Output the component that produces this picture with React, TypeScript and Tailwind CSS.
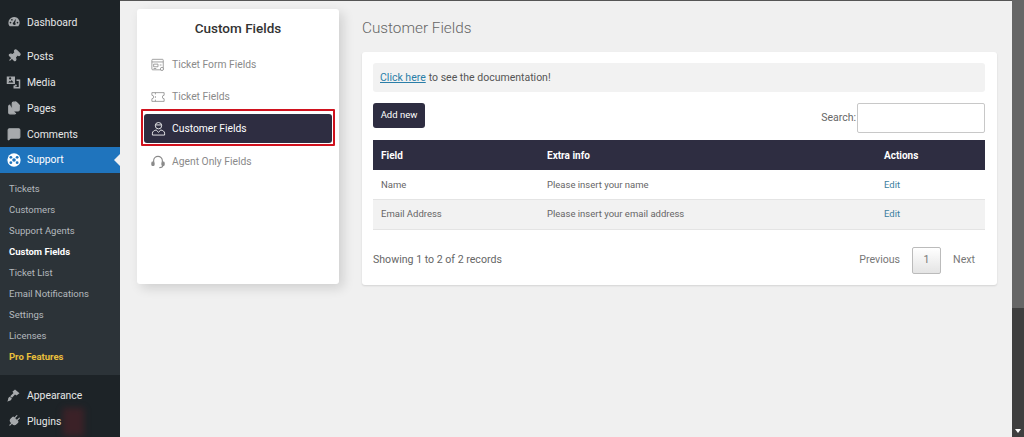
import type { ReactNode } from "react";
import { Pin, Files, MessageSquare, Plug } from "lucide-react";

const subItems = [
  { label: "Tickets" },
  { label: "Customers" },
  { label: "Support Agents" },
  { label: "Custom Fields", active: true },
  { label: "Ticket List" },
  { label: "Email Notifications" },
  { label: "Settings" },
  { label: "Licenses" },
  { label: "Pro Features", pro: true },
];

function MenuItem({ icon, label }: { icon: ReactNode; label: string }) {
  return (
    <div className="flex h-[26px] items-center text-[10.4px] text-[#e6e7e8]">
      <span className="flex w-[27px] justify-center text-[#a7aaad]">{icon}</span>
      <span className="pt-[2px]">{label}</span>
    </div>
  );
}

function DashIcon() {
  return (
    <svg viewBox="0 0 20 20" className="h-[14px] w-[14px]" fill="#a7aaad">
      <path d="M10 3a8 8 0 0 0-8 8c0 2 .7 3.800 1.900 5.200h12.200A8 8 0 0 0 10 3zM5 12a1.200 1.200 0 1 1 0-2.400A1.200 1.200 0 0 1 5 12zm2-4a1.200 1.200 0 1 1 0-2.400A1.200 1.200 0 0 1 7 8zm3 6a1.800 1.800 0 0 1-.6-3.500L12 6l.6.300-1 5c.6.300.9 1 .9 1.600A1.800 1.800 0 0 1 10 14zm5-2a1.200 1.200 0 1 1 0-2.400 1.200 1.200 0 0 1 0 2.400z" />
    </svg>
  );
}

function MediaIcon() {
  return (
    <svg viewBox="0 0 20 20" className="h-[15px] w-[15px]" fill="#a7aaad">
      <path d="M1 2h11v10H1zM4 4.500a1.500 1.500 0 1 0 3 0 1.500 1.500 0 0 0-3 0zM3 10h7L7.500 6.500 6 8.500 5 7.500z" fillRule="evenodd" />
      <path d="M14 6h5v12h-9v-4h2v2h5V8h-3z" />
      <circle cx="13" cy="14" r="1.500" />
    </svg>
  );
}

function BrushIcon() {
  return (
    <svg viewBox="0 0 20 20" className="h-[15px] w-[15px]" fill="#a7aaad">
      <path d="M12 2l6 5-4 3-2-1.500-4 4.500-2.500-2 4.500-4.500L8.500 5z" />
      <path d="M5 11.500l2.800 2.300c-.5 2.200-2.500 4-6.300 4.200 1.500-1.500 1.200-3 1.500-4.300.2-.9 1-1.800 2-2.200z" />
    </svg>
  );
}

function SupportIcon() {
  return (
    <svg viewBox="0 0 20 20" className="h-[14px] w-[14px]">
      <circle cx="10" cy="10" r="9.500" fill="#fff" />
      <circle cx="10" cy="10" r="2.600" fill="#1f74bd" />
      <circle cx="5.500" cy="6.200" r="2" fill="#1f74bd" />
      <circle cx="14.500" cy="6.200" r="2" fill="#1f74bd" />
      <circle cx="5.500" cy="13.800" r="2" fill="#1f74bd" />
      <circle cx="14.500" cy="13.800" r="2" fill="#1f74bd" />
    </svg>
  );
}

function Sidebar() {
  return (
    <aside className="relative flex h-[437px] w-[120px] shrink-0 flex-col overflow-hidden bg-[#1d2327]">
      <div className="pt-[9px]">
        <MenuItem icon={<DashIcon />} label="Dashboard" />
      </div>
      <div className="mt-[8px]">
        <MenuItem icon={<Pin className="h-[14px] w-[14px] rotate-45 fill-[#a7aaad]" />} label="Posts" />
        <MenuItem icon={<MediaIcon />} label="Media" />
        <MenuItem icon={<Files className="h-[14px] w-[14px] fill-[#a7aaad]" />} label="Pages" />
        <MenuItem icon={<MessageSquare className="h-[14px] w-[14px] fill-[#a7aaad]" />} label="Comments" />
      </div>
      <div className="relative flex h-[26px] items-center bg-[#1f74bd] text-[10.4px] text-white">
        <span className="flex w-[27px] justify-center">
          <SupportIcon />
        </span>
        <span>Support</span>
        <span className="absolute right-0 top-[7px] border-y-[6px] border-r-[6px] border-y-transparent border-r-[#f0f0f1]" />
      </div>
      <div className="bg-[#2c3338] pb-[7px] pt-[6px]">
        {subItems.map((item) => (
          <div
            key={item.label}
            className={
              item.pro
                ? "flex h-[21px] items-center pl-[9px] text-[9.5px] font-bold text-[#e8bf3c]"
                : item.active
                  ? "flex h-[21px] items-center pl-[9px] text-[9.5px] font-bold text-white"
                  : "flex h-[21px] items-center pl-[9px] text-[9.5px] text-[#b4b9be]"
            }
          >
            {item.label}
          </div>
        ))}
      </div>
      <div className="mt-[7px]">
        <MenuItem icon={<BrushIcon />} label="Appearance" />
        <MenuItem icon={<Plug className="h-[14px] w-[14px] rotate-45 fill-[#a7aaad]" />} label="Plugins" />
      </div>
      <div className="absolute left-[63px] top-[408px] h-[28px] w-[21px] bg-[#5a1f28]/50 blur-[3px]" />
    </aside>
  );
}

function FormIcon() {
  return (
    <svg viewBox="0 0 16 16" fill="none" stroke="#8a8a8a" strokeWidth="0.9" className="h-[14px] w-[14px]">
      <rect x="1" y="1.500" width="13" height="12" rx="1" />
      <path d="M1 4.500h13M3 7h5v3H3zM10 8h2M3 12h3" />
      <circle cx="12.500" cy="12.500" r="1.800" fill="#fff" />
    </svg>
  );
}

function TicketIcon() {
  return (
    <svg viewBox="0 0 16 16" fill="none" stroke="#8a8a8a" strokeWidth="0.9" className="h-[14px] w-[14px]">
      <path d="M1 3h14v3a2 2 0 0 0 0 4v3H1v-3a2 2 0 0 0 0-4z" />
      <path d="M5 3v2M5 7v2M5 11v2" />
    </svg>
  );
}

function AgentIcon() {
  return (
    <svg viewBox="0 0 16 16" fill="none" stroke="#ffffff" strokeWidth="0.9" className="h-[15px] w-[15px]">
      <circle cx="8" cy="5" r="3.400" />
      <path d="M4.600 4.200h6.800" />
      <path d="M1.500 15v-2c0-2 2-3 4-3.400L8 12l2.500-2.400c2 .4 4 1.400 4 3.400v2z" />
    </svg>
  );
}

function HeadsetIcon() {
  return (
    <svg viewBox="0 0 16 16" fill="none" stroke="#8a8a8a" strokeWidth="1.300" className="h-[14px] w-[14px]">
      <path d="M3 8V6.500a5 5 0 0 1 10 0V8" />
      <rect x="1" y="8" width="2.500" height="4" rx="1" fill="#8a8a8a" />
      <rect x="12.500" y="8" width="2.500" height="4" rx="1" fill="#8a8a8a" />
      <path d="M13.500 12c0 1.500-1.500 2.500-4 2.500" />
    </svg>
  );
}

function FieldsNav() {
  return (
    <div className="h-[275px] w-[202px] shrink-0 rounded-[3px] bg-white shadow-[4px_4px_12px_rgba(0,0,0,0.14)]">
      <h2 className="pt-[10px] text-center text-[13.5px] font-medium leading-[19px] text-[#333]">Custom Fields</h2>
      <div className="mt-[15px] flex h-[24px] items-center pl-[14px] text-[10.3px] text-[#8a8a8a]">
        <FormIcon />
        <span className="ml-[7px]">Ticket Form Fields</span>
      </div>
      <div className="mt-[8px] flex h-[24px] items-center pl-[14px] text-[10.3px] text-[#8a8a8a]">
        <TicketIcon />
        <span className="ml-[7px]">Ticket Fields</span>
      </div>
      <div className="mx-[4px] rounded-[1px] border-2 border-[#d0121e] px-[1px] pb-[1px] pt-[3px]">
        <div className="flex h-[29px] items-center rounded-[3px] bg-[#2e2d41] pl-[7px] text-[10.3px] text-white">
          <AgentIcon />
          <span className="ml-[6px]">Customer Fields</span>
        </div>
      </div>
      <div className="mt-[4px] flex h-[24px] items-center pl-[14px] text-[10.3px] text-[#8a8a8a]">
        <HeadsetIcon />
        <span className="ml-[7px]">Agent Only Fields</span>
      </div>
    </div>
  );
}

function RecordsTable() {
  return (
    <table className="w-full table-fixed border-collapse text-[9.5px] text-[#666]">
      <thead>
        <tr className="h-[30px] bg-[#2e2d41] text-left text-[10px] text-white">
          <th className="w-[166px] pl-[8px] font-bold">Field</th>
          <th className="w-[345px] pl-[8px] font-bold">Extra info</th>
          <th className="font-bold">Actions</th>
        </tr>
      </thead>
      <tbody>
        <tr className="h-[29px] border-b border-[#e4e4e4]">
          <td className="pl-[8px] pt-[1px]">Name</td>
          <td className="pl-[8px] pt-[1px]">Please insert your name</td>
          <td className="pt-[1px] text-[#3c7f9f]">Edit</td>
        </tr>
        <tr className="h-[30px] border-b border-[#e4e4e4] bg-[#f2f2f2]">
          <td className="pl-[8px] pt-[1px]">Email Address</td>
          <td className="pl-[8px] pt-[1px]">Please insert your email address</td>
          <td className="pt-[1px] text-[#3c7f9f]">Edit</td>
        </tr>
      </tbody>
    </table>
  );
}

function Content() {
  return (
    <div className="ml-[23px] min-w-0 flex-1">
      <h1 className="pt-[8px] text-[15.3px] font-light leading-[22px] text-[#666]">Customer Fields</h1>
      <div className="mt-[13px] h-[233px] rounded-[3px] bg-white pl-[11px] pr-[12px] pt-[11px] shadow-[0_1px_2px_rgba(0,0,0,0.12)]">
        <div className="flex h-[29px] items-center rounded-[3px] bg-[#f2f2f2] pl-[7px] text-[10.5px] text-[#555]">
          <a className="text-[#2a7ea8] underline">Click here</a>
          <span className="ml-[3px]">to see the documentation!</span>
        </div>
        <div className="mt-[11px] flex items-start justify-between">
          <button className="h-[25px] w-[52px] rounded-[3px] bg-[#2e2d41] text-[9.5px] text-white">Add new</button>
          <label className="flex items-center text-[10.5px] text-[#666]">
            Search:
            <span className="ml-[1px] block h-[30px] w-[128px] rounded-[2px] border border-[#c8c8c8] bg-white" />
          </label>
        </div>
        <div className="mt-[7px]">
          <RecordsTable />
        </div>
        <div className="mt-[17px] flex items-center justify-between text-[10.6px] text-[#666]">
          <span>Showing 1 to 2 of 2 records</span>
          <div className="flex items-center pr-[10px] text-[#777]">
            <span>Previous</span>
            <span className="mx-[12px] flex h-[27px] w-[29px] items-center justify-center rounded-[2px] border border-[#bbb] bg-gradient-to-b from-white to-[#e4e4e4]">1</span>
            <span>Next</span>
          </div>
        </div>
      </div>
    </div>
  );
}

export default function App() {
  return (
    <div className="flex h-[437px] w-[1024px] overflow-hidden bg-[#f0f0f0] font-['Roboto','Noto_Sans',sans-serif]">
      <Sidebar />
      <main className="flex min-w-0 flex-1 flex-col">
        <div className="h-px bg-[#555]" />
        <div className="flex flex-1 pl-[17px] pr-[15px] pt-[8px]">
          <FieldsNav />
          <Content />
        </div>
      </main>
      <div className="flex w-[12px] shrink-0 flex-col items-center bg-[#3f3f3f]">
        <div className="h-[308px] w-full bg-[#666]" />
        <span className="mb-[4px] mt-auto border-x-[3px] border-t-[4px] border-x-transparent border-t-white" />
      </div>
    </div>
  );
}
